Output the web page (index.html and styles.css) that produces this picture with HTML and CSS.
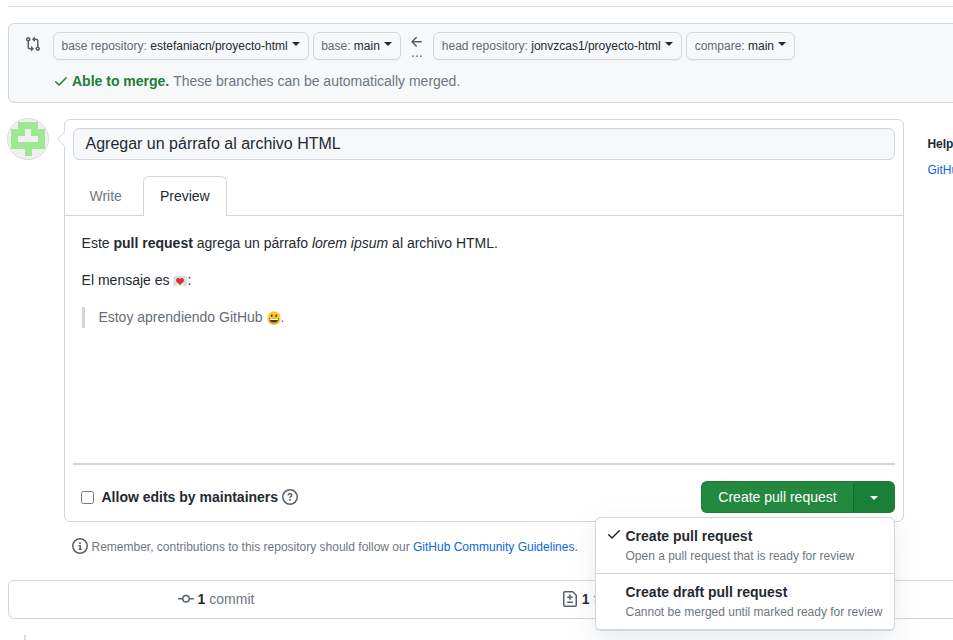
FILE: index.html
```html
<!DOCTYPE html>
<html lang="es">
<head>
<meta charset="utf-8">
<title>Comparing changes</title>
<link rel="stylesheet" href="styles.css">
</head>
<body>
<main class="page">
  <section class="range">
    <svg class="icon range-icon" width="16" height="16" viewBox="0 0 16 16"><path fill-rule="evenodd" d="M9.573.677A.25.25 0 0 1 10 .854V2.500h1A2.500 2.500 0 0 1 13.500 5v5.628a2.251 2.251 0 1 1-1.500 0V5a1 1 0 0 0-1-1h-1v1.646a.25.25 0 0 1-.427.177L7.177 3.427a.25.25 0 0 1 0-.354L9.573.677zM6 12v-1.646a.25.25 0 0 1 .427-.177l2.396 2.396a.25.25 0 0 1 0 .354l-2.396 2.396A.25.25 0 0 1 6 15.146V13.500H5A2.500 2.500 0 0 1 2.500 11V5.372a2.250 2.250 0 1 1 1.500 0V11a1 1 0 0 0 1 1h1zM4 3.250a.75.75 0 1 0-1.500 0 .75.75 0 0 0 1.500 0zM12.750 12a.75.75 0 1 0 0 1.500.75.75 0 0 0 0-1.500z"/></svg>
    <div class="range-main">
      <div class="range-row">
        <button class="select">base repository: <b>estefaniacn/proyecto-html</b><i class="caret"></i></button>
        <button class="select">base: <b>main</b><i class="caret"></i></button>
        <div class="direction">
          <svg class="icon" width="16" height="16" viewBox="0 0 16 16"><path d="M7.780 12.530a.75.75 0 0 1-1.060 0L2.470 8.280a.75.75 0 0 1 0-1.060l4.250-4.250a.75.75 0 0 1 1.060 1.060L4.810 7h7.440a.75.75 0 0 1 0 1.500H4.810l2.970 2.970a.75.75 0 0 1 0 1.060z"/></svg>
          <span>...</span>
        </div>
        <button class="select head">head repository: <b>jonvzcas1/proyecto-html</b><i class="caret"></i></button>
        <button class="select">compare: <b>main</b><i class="caret"></i></button>
      </div>
      <p class="merge"><svg class="check" width="16" height="16" viewBox="0 0 16 16"><path d="M13.780 4.220a.75.75 0 0 1 0 1.060l-7.250 7.250a.75.75 0 0 1-1.060 0L2.220 9.280a.75.75 0 0 1 1.060-1.060L6 10.940l6.720-6.720a.75.75 0 0 1 1.060 0z"/></svg><strong>Able to merge.</strong>&nbsp;These branches can be automatically merged.</p>
    </div>
  </section>

  <section class="compose">
    <svg class="avatar" width="42" height="42" viewBox="0 0 42 42"><circle cx="21" cy="21" r="20.500" fill="#f0f0f0" stroke="#dcdcdc"/><path fill="#9ee892" d="M11 4h20v7h7v20H25v7h-7v-7H4V11h7z"/><path fill="#f0f0f0" d="M18 11h6v7h7v6H11v-6h7z"/></svg>
    <div class="editor">
      <svg class="pointer" width="8" height="16" viewBox="0 0 8 16"><path d="M8 .5L.7 8 8 15.500" fill="#fff" stroke="#d0d7de"/></svg>
      <div class="title">Agregar un párrafo al archivo HTML</div>
      <nav class="tabs"><span class="tab">Write</span><span class="tab active">Preview</span></nav>
      <div class="preview">
        <p>Este <b>pull request</b> agrega un párrafo <em>lorem ipsum</em> al archivo HTML.</p>
        <p>El mensaje es <svg class="emoji" width="14" height="14" viewBox="0 0 14 14"><rect x=".3" y="2" width="13.400" height="10" rx=".8" fill="#dcdcdc"/><path d="M.5 11.800l5-4.300h3l5 4.300" fill="#eee" stroke="#c4c4c4" stroke-width=".6"/><path d="M7 11L3.500 7.700C1.700 5.300 5.200 2.400 7 4.900c1.800-2.500 5.300.4 3.500 2.800z" fill="#df3030"/></svg>:</p>
        <blockquote>Estoy aprendiendo GitHub <svg class="emoji" width="14" height="14" viewBox="0 0 14 14"><circle cx="7" cy="7" r="6.700" fill="#fccb25"/><path d="M.9 9.500a6.700 6.700 0 0 0 12.200 0Q7 13.500.9 9.500z" fill="#f3a51c"/><ellipse cx="4.800" cy="4.700" rx=".9" ry="1.300" fill="#493325"/><ellipse cx="9.200" cy="4.700" rx=".9" ry="1.300" fill="#493325"/><path d="M2.200 7.200Q7 8.300 11.800 7.200 11.300 11.500 7 11.500T2.200 7.200z" fill="#4c3722"/><path d="M2.800 7.500Q7 8.400 11.200 7.500L10.800 9H3.200z" fill="#fff"/></svg>.</blockquote>
      </div>
      <div class="actions">
        <label class="allow"><input type="checkbox">Allow edits by maintainers</label>
        <svg class="icon" width="16" height="16" viewBox="0 0 16 16"><path fill-rule="evenodd" d="M8 1.500a6.500 6.500 0 1 0 0 13 6.500 6.500 0 0 0 0-13zM0 8a8 8 0 1 1 16 0A8 8 0 0 1 0 8zm9 3a1 1 0 1 1-2 0 1 1 0 0 1 2 0zM6.920 6.085c.081-.16.190-.299.340-.398.145-.097.371-.187.740-.187.280 0 .553.087.738.225A.613.613 0 0 1 9 6.250c0 .177-.040.264-.077.318a.956.956 0 0 1-.277.245c-.076.051-.158.100-.258.161l-.007.004a7.728 7.728 0 0 0-.313.195 2.416 2.416 0 0 0-.692.661.75.75 0 0 0 1.248.832.956.956 0 0 1 .276-.240c.3-.19.600-.350.923-.612.260-.240.677-.680.677-1.564 0-.765-.377-1.360-.862-1.725A2.760 2.760 0 0 0 8 4c-.631 0-1.154.160-1.572.438-.413.276-.680.638-.849.977a.75.75 0 1 0 1.342.670z"/></svg>
        <div class="split"><button class="create">Create pull request</button><button class="more"><i class="caret"></i></button>
          <div class="menu">
            <div class="option">
              <svg class="check" width="16" height="16" viewBox="0 0 16 16"><path d="M13.780 4.220a.75.75 0 0 1 0 1.060l-7.250 7.250a.75.75 0 0 1-1.060 0L2.220 9.280a.75.75 0 0 1 1.060-1.060L6 10.940l6.720-6.720a.75.75 0 0 1 1.060 0z"/></svg>
              <div><strong>Create pull request</strong><small>Open a pull request that is ready for review</small></div>
            </div>
            <div class="option">
              <div><strong>Create draft pull request</strong><small>Cannot be merged until marked ready for review</small></div>
            </div>
          </div>
        </div>
      </div>
    </div>
    <aside class="help"><strong>Helpful resources</strong><a>GitHub Community Guidelines</a></aside>
  </section>

  <p class="note"><svg class="icon" width="16" height="16" viewBox="0 0 16 16"><path fill-rule="evenodd" d="M8 1.500a6.500 6.500 0 1 0 0 13 6.500 6.500 0 0 0 0-13zM0 8a8 8 0 1 1 16 0A8 8 0 0 1 0 8zm6.500-.25A.75.75 0 0 1 7.250 7h1a.75.75 0 0 1 .75.75v2.750h.25a.75.75 0 0 1 0 1.500h-2a.75.75 0 0 1 0-1.500h.25v-2h-.25a.75.75 0 0 1-.75-.75zM8 6a1 1 0 1 0 0-2 1 1 0 0 0 0 2z"/></svg><span>Remember, contributions to this repository should follow our <a>GitHub Community Guidelines.</a></span></p>

  <section class="stats">
    <div><svg class="icon" width="16" height="16" viewBox="0 0 16 16"><path fill-rule="evenodd" d="M10.500 7.750a2.500 2.500 0 1 1-5 0 2.500 2.500 0 0 1 5 0zm1.430.75a4.002 4.002 0 0 1-7.860 0H.75a.75.75 0 0 1 0-1.500h3.320a4.001 4.001 0 0 1 7.860 0h3.320a.75.75 0 0 1 0 1.500h-3.320z"/></svg><b>1</b> commit</div>
    <div><svg class="icon" width="16" height="16" viewBox="0 0 16 16"><path fill-rule="evenodd" d="M2.750 1.500a.25.25 0 0 0-.25.25v12.500c0 .138.112.25.25.25h10.500a.25.25 0 0 0 .25-.25V4.664a.25.25 0 0 0-.073-.177l-2.914-2.914a.25.25 0 0 0-.177-.073H2.750zM1 1.750C1 .784 1.784 0 2.750 0h7.586c.464 0 .909.184 1.237.513l2.914 2.914c.329.328.513.773.513 1.237v9.586A1.750 1.750 0 0 1 13.250 16H2.750A1.750 1.750 0 0 1 1 14.250V1.750zm7 1.500a.75.75 0 0 1 .75.75v1.500h1.500a.75.75 0 0 1 0 1.500h-1.500v1.500a.75.75 0 0 1-1.500 0V7h-1.500a.75.75 0 0 1 0-1.500h1.500V4A.75.75 0 0 1 8 3.250zm-3 8a.75.75 0 0 1 .75-.75h4.500a.75.75 0 0 1 0 1.500h-4.500a.75.75 0 0 1-.75-.75z"/></svg><b>1</b> file changed</div>
    <div></div>
  </section>
  <div class="timeline"></div>
</main>
</body>
</html>
```
FILE: styles.css
```css
* { box-sizing: border-box; }
html, body { overflow: hidden; }
body {
  margin: 0;
  height: 640px;
  background: #fff;
  color: #24292f;
  font: 14px/21px "Liberation Sans", Arial, sans-serif;
}
p, blockquote { margin: 0; }
button { font: inherit; color: inherit; }
svg { flex: none; }
a { color: #0969da; }
.icon { fill: #57606a; }
.caret {
  display: inline-block;
  border: 4px solid transparent;
  border-top-color: currentColor;
  border-bottom: 0;
}
.page { width: 1232px; margin: 6px 0 0 8px; border-top: 1px solid #d8dee4; padding-top: 16px; }

.range {
  display: flex;
  height: 80px;
  padding: 8px 16px;
  border: 1px solid #d0d7de;
  border-radius: 6px;
  background: #f6f8fa;
}
.range-icon { margin: 4px 12px 0 0; }
.range-row { display: flex; gap: 4px; height: 28px; }
.select {
  display: flex;
  align-items: center;
  height: 28px;
  padding: 0 8px 0 7.500px;
  border: 1px solid #d5d8db;
  border-radius: 6px;
  background: #f6f8fa;
  box-shadow: 0 1px 0 rgba(27, 31, 36, .04);
  color: #656a70;
  font-size: 12px;
  white-space: pre;
}
.select.head { padding-left: 8px; padding-right: 8.500px; }
.select b { color: #24292f; font-weight: 400; }
.select .caret { color: #24292f; margin: -4px 0 0 4px; }
.direction {
  display: flex;
  flex-direction: column;
  align-items: center;
  width: 24px;
  padding-top: 2px;
  color: #57606a;
  line-height: 4px;
}
.merge { display: flex; align-items: center; margin-top: 11px; color: #6e7781; }
.merge strong, .merge .check { color: #1a7f37; fill: #1a7f37; }
.merge .check { margin: -2px 3px 0 0; }

.compose { display: flex; margin: 16px 0 0 -1px; }
.avatar { margin-top: -1px; }
.editor {
  position: relative;
  width: 840px;
  height: 403px;
  margin-left: 15px;
  border: 1px solid #d0d7de;
  border-radius: 6px;
}
.pointer { position: absolute; left: -8px; top: 11px; }
.title {
  height: 32px;
  margin: 8px 8px 16px;
  padding: 0 11.500px;
  border: 1px solid #d0d7de;
  border-radius: 6px;
  background: #f6f8fa;
  box-shadow: inset 0 1px 0 rgba(208, 215, 222, .2);
  font-size: 16px;
  line-height: 30px;
}
.tabs { display: flex; height: 40px; padding-left: 8.500px; border-bottom: 1px solid #d0d7de; }
.tab { height: 40px; padding: 10px 16px; color: #6e7781; }
.tab.active {
  width: 84px;
  margin-left: 5px;
  padding: 9px 16px;
  border: 1px solid #d0d7de;
  border-bottom: 0;
  border-radius: 6px 6px 0 0;
  background: #fff;
  color: #24292f;
}
.preview {
  display: flex;
  flex-direction: column;
  gap: 16px;
  height: 249px;
  margin: 0 8px;
  padding: 17px 8.600px;
  border-bottom: 2px solid #d0d7de;
}
.preview blockquote { height: 21px; padding-left: 13.800px; border-left: 3px solid #d0d7de; color: #656d76; }
.emoji { vertical-align: -3px; }
.actions { display: flex; align-items: center; padding: 16px 8px 8px; }
.allow { display: flex; align-items: center; margin-right: 3.500px; font-weight: 700; }
.allow input { width: 13px; height: 13px; margin: 0 7.500px 0 8px; }
.split { position: relative; display: flex; margin-left: auto; }
.create, .more {
  height: 32px;
  padding: 0;
  border: 1px solid #1e7b38;
  background: #22893e;
  color: #fff;
}
.create { width: 152px; border-right: 0; border-radius: 6px 0 0 6px; }
.more { width: 42px; border-left-color: #17692f; border-radius: 0 6px 6px 0; background: #1a7f37; }
.more .caret { vertical-align: 2px; }
.menu {
  position: absolute;
  z-index: 2;
  right: 0;
  top: 36px;
  width: 300px;
  border: 1px solid #d0d7de;
  border-radius: 6px;
  background: #fff;
  box-shadow: 0 8px 24px rgba(140, 149, 159, .2);
}
.option { display: flex; height: 56px; padding: 8px 0 0 29.500px; border-bottom: 1px solid #d0d7de; }
.option .check { margin: 0 3.500px 0 -19.500px; fill: #24292f; }
.option strong, .option small { display: block; white-space: nowrap; }
.option small { color: #6e7781; font-size: 12px; line-height: 18px; }
.help { margin: 16px 0 0 23.400px; font-size: 12px; line-height: 18px; white-space: nowrap; }
.help strong, .help a { display: block; margin-bottom: 8px; }

.note { display: flex; align-items: center; gap: 3.500px; height: 18px; margin: 15px 0 25px 64px; color: #6e7781; font-size: 12px; }
.note span { padding-top: 2px; }
.stats {
  display: grid;
  grid-template-columns: 414px 385px 1fr;
  height: 39px;
  border: 1px solid #d0d7de;
  border-radius: 6px;
  color: #6e7781;
}
.stats div { display: flex; align-items: center; justify-content: center; gap: 4px; }
.stats .icon { margin-top: -1px; }
.stats b { color: #24292f; }
.timeline { width: 2px; height: 20px; margin: 16px 0 0 16px; background: #d8dee4; }
```
